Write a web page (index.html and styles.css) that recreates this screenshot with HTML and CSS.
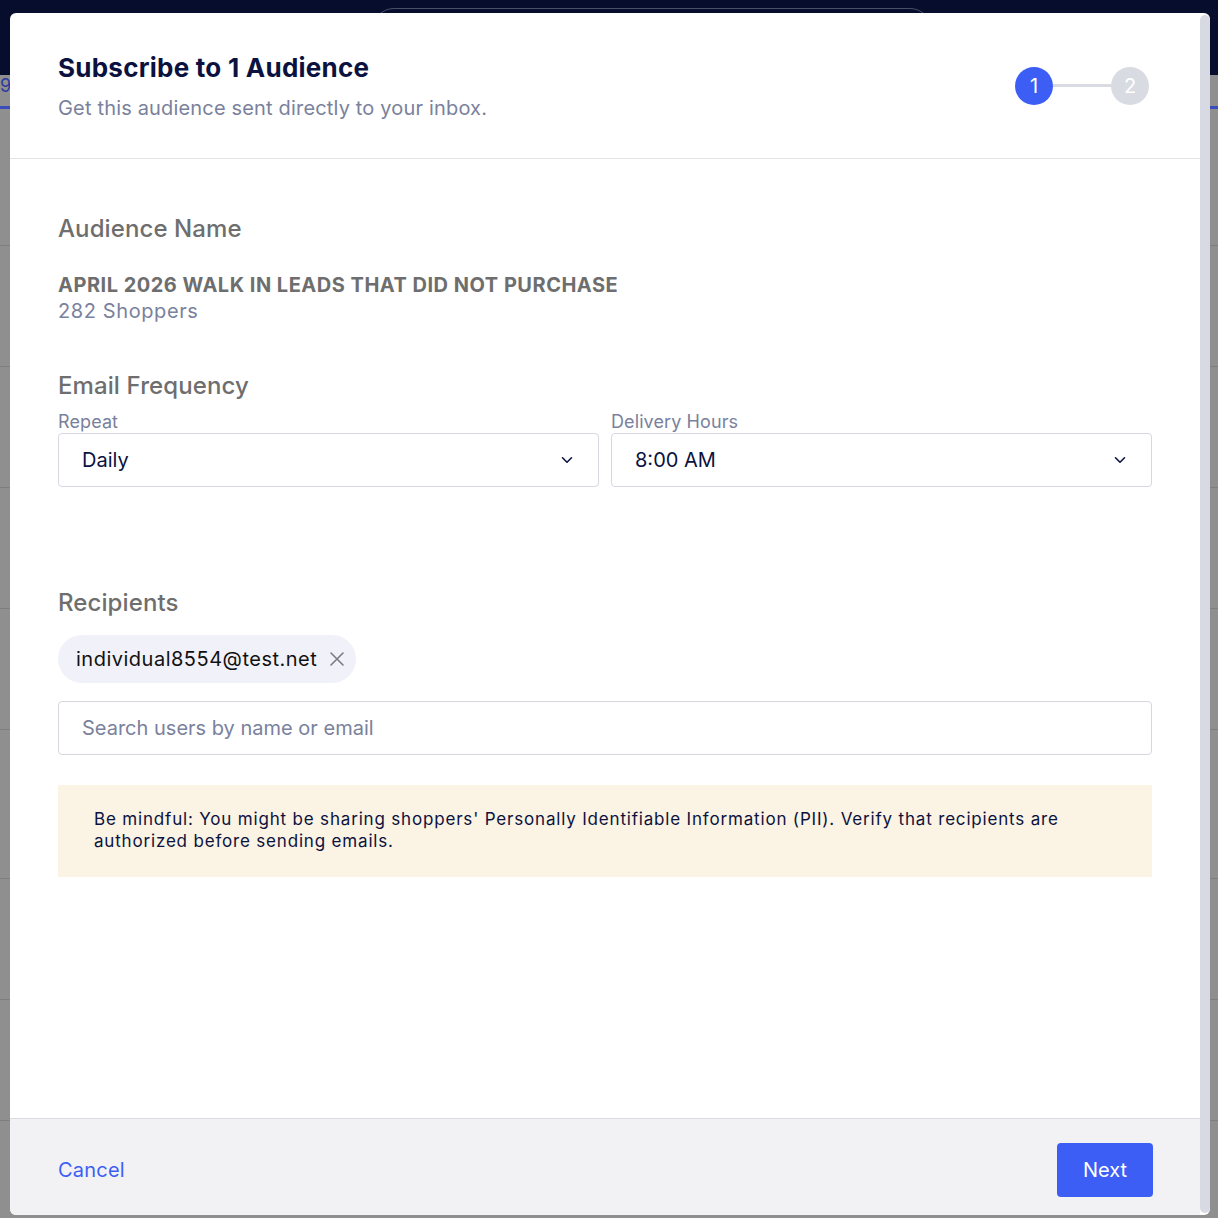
FILE: index.html
```html
<!DOCTYPE html>
<html lang="en">

<head>
    <meta charset="utf-8">
    <title>Subscribe to 1 Audience</title>
    <link rel="stylesheet" href="styles.css">
</head>

<body class="page">
    <!-- page behind the dialog -->
    <div class="backdrop">
        <div class="navbar">
            <div class="navbar-search"></div>
        </div>
        <div class="tabs">
            <span class="tab-text">9,</span>
        </div>
        <div class="row row-short"></div>
        <div class="row"></div>
        <div class="row"></div>
        <div class="row"></div>
        <div class="row"></div>
        <div class="row row-tall"></div>
        <div class="row"></div>
        <div class="row"></div>
        <div class="row"></div>
    </div>

    <div class="modal">
        <div class="modal-header">
            <div class="modal-titles">
                <h1 class="modal-title">Subscribe to 1 Audience</h1>
                <p class="modal-subtitle">Get this audience sent directly to your inbox.</p>
            </div>
            <div class="stepper">
                <span class="step step-active">1</span>
                <span class="step-line"></span>
                <span class="step">2</span>
            </div>
        </div>

        <div class="modal-body">
            <h2 class="section-title">Audience Name</h2>
            <div class="audience-name">APRIL 2026 WALK IN LEADS THAT DID NOT PURCHASE</div>
            <div class="audience-count">282 Shoppers</div>

            <h2 class="section-title section-frequency">Email Frequency</h2>
            <div class="field-row">
                <div class="field">
                    <label class="field-label">Repeat</label>
                    <div class="select">
                        <span>Daily</span>
                        <svg class="chevron" width="12" height="8" viewBox="0 0 12 8">
                            <path d="M1.5 1.8 L6 6.2 L10.5 1.8" fill="none" stroke="#0b1240" stroke-width="1.6" stroke-linecap="round" stroke-linejoin="round"/>
                        </svg>
                    </div>
                </div>
                <div class="field">
                    <label class="field-label">Delivery Hours</label>
                    <div class="select">
                        <span>8:00 AM</span>
                        <svg class="chevron" width="12" height="8" viewBox="0 0 12 8">
                            <path d="M1.5 1.8 L6 6.2 L10.5 1.8" fill="none" stroke="#0b1240" stroke-width="1.6" stroke-linecap="round" stroke-linejoin="round"/>
                        </svg>
                    </div>
                </div>
            </div>

            <h2 class="section-title section-recipients">Recipients</h2>
            <div class="chips">
                <span class="chip">
                    individual8554@test.net
                    <svg class="chip-x" width="16" height="16" viewBox="0 0 16 16">
                        <path d="M2 2 L14 14 M14 2 L2 14" stroke="#7b7b80" stroke-width="1.6" stroke-linecap="round"/>
                    </svg>
                </span>
            </div>
            <div class="search">Search users by name or email</div>

            <div class="notice">
                Be mindful: You might be sharing shoppers' Personally Identifiable Information (PII). Verify that recipients are authorized before sending emails.
            </div>
        </div>

        <div class="modal-footer">
            <a class="cancel" href="#">Cancel</a>
            <button class="next">Next</button>
        </div>

        <div class="scrollbar"></div>
    </div>
</body>

</html>
```
FILE: styles.css
```css
.page {
    margin: 0;
    background-color: #8f8f8f;
    font-family: Inter, "Noto Sans", sans-serif;
    height: 1218px;
    overflow: hidden;
}

/* background page */
.backdrop {
    display: flex;
    flex-direction: column;
}

.navbar {
    height: 75px;
    background-color: #070d2d;
    position: relative;
}

.navbar-search {
    position: absolute;
    left: 372px;
    top: 8px;
    width: 558px;
    height: 44px;
    border: 1px solid #4a4f68;
    border-radius: 22px;
}

.tabs {
    height: 31px;
    border-bottom: 3px solid #3b4dbb;
    color: #2b3a9c;
    font-size: 18px;
}

.tab-text {
    display: inline-block;
    margin-top: 0;
}

.row {
    height: 120px;
    border-bottom: 1px solid #7e7e7e;
}

.row-short {
    height: 136px;
}

.row-tall {
    height: 148px;
}

/* dialog */
.modal {
    position: absolute;
    left: 10px;
    top: 13px;
    width: 1200px;
    height: 1202px;
    background-color: #ffffff;
    border-radius: 6px;
    display: flex;
    flex-direction: column;
    overflow: hidden;
    padding-right: 10px;
    box-sizing: border-box;
}

.scrollbar {
    position: absolute;
    right: 0;
    top: 2px;
    bottom: 2px;
    width: 10px;
    border-radius: 5px;
    background-color: #d7dae2;
}

.modal-header {
    display: flex;
    justify-content: space-between;
    align-items: center;
    padding: 36px 51px 36px 48px;
    border-bottom: 1px solid #e3e3e8;
}

.modal-title {
    margin: 0;
    font-size: 26px;
    line-height: 38px;
    font-weight: 700;
    color: #0b1240;
    letter-spacing: 0.25px;
}

.modal-subtitle {
    margin: 7px 0 0;
    font-size: 20px;
    line-height: 28px;
    color: #7a819c;
    letter-spacing: 0.17px;
}

.stepper {
    display: flex;
    align-items: center;
}

.step {
    width: 38px;
    height: 38px;
    border-radius: 50%;
    background-color: #d8dbe2;
    color: #ffffff;
    font-size: 20px;
    display: flex;
    align-items: center;
    justify-content: center;
}

.step-active {
    background-color: #3d5ef5;
}

.step-line {
    width: 58px;
    height: 3px;
    background-color: #d8dbe2;
}

.modal-body {
    flex: 1;
    padding: 55px 48px 0;
}

.section-title {
    margin: 0;
    font-size: 24px;
    line-height: 30px;
    font-weight: 500;
    color: #6e6e6e;
    letter-spacing: 0.1px;
}

.audience-name {
    margin-top: 28px;
    font-size: 20px;
    line-height: 26px;
    font-weight: 700;
    color: #6e6e6e;
    letter-spacing: 0.5px;
}

.audience-count {
    font-size: 20px;
    line-height: 26px;
    color: #7a819c;
    letter-spacing: 0.6px;
}

.section-frequency {
    margin-top: 47px;
}

.field-row {
    display: grid;
    grid-template-columns: 1fr 1fr;
    gap: 12px;
    margin-top: 10px;
}

.field-label {
    display: block;
    font-size: 18px;
    line-height: 22px;
    color: #7a819c;
    letter-spacing: 0.1px;
}

.select {
    height: 54px;
    box-sizing: border-box;
    border: 1px solid #d6d8e0;
    border-radius: 4px;
    display: flex;
    align-items: center;
    justify-content: space-between;
    padding: 0 25px 0 23px;
    font-size: 20px;
    color: #0b1240;
}

.section-recipients {
    margin-top: 101px;
}

.chips {
    display: flex;
    margin-top: 17px;
}

.chip {
    display: flex;
    align-items: center;
    gap: 12px;
    height: 48px;
    padding: 0 11px 0 18px;
    border-radius: 24px;
    background-color: #f1f2f9;
    font-size: 20px;
    color: #111111;
    letter-spacing: 0.5px;
}

.search {
    margin-top: 18px;
    height: 54px;
    box-sizing: border-box;
    border: 1px solid #d6d8e0;
    border-radius: 4px;
    display: flex;
    align-items: center;
    padding: 0 23px;
    font-size: 20px;
    color: #7a819c;
}

.notice {
    margin-top: 30px;
    background-color: #fbf3e3;
    padding: 23px 36px 25px;
    font-size: 17px;
    line-height: 22px;
    color: #0b1240;
    letter-spacing: 0.82px;
}

.modal-footer {
    height: 97px;
    box-sizing: border-box;
    border-top: 1px solid #d9dce3;
    background-color: #f2f2f5;
    display: flex;
    justify-content: space-between;
    align-items: flex-start;
    padding: 24px 47px 0 48px;
}

.cancel {
    color: #3d5ef5;
    font-size: 20px;
    line-height: 54px;
    text-decoration: none;
    letter-spacing: 0.2px;
}

.next {
    height: 54px;
    width: 96px;
    border: none;
    border-radius: 4px;
    background-color: #3d5ef5;
    color: #ffffff;
    font-family: inherit;
    font-size: 20px;
}
```
